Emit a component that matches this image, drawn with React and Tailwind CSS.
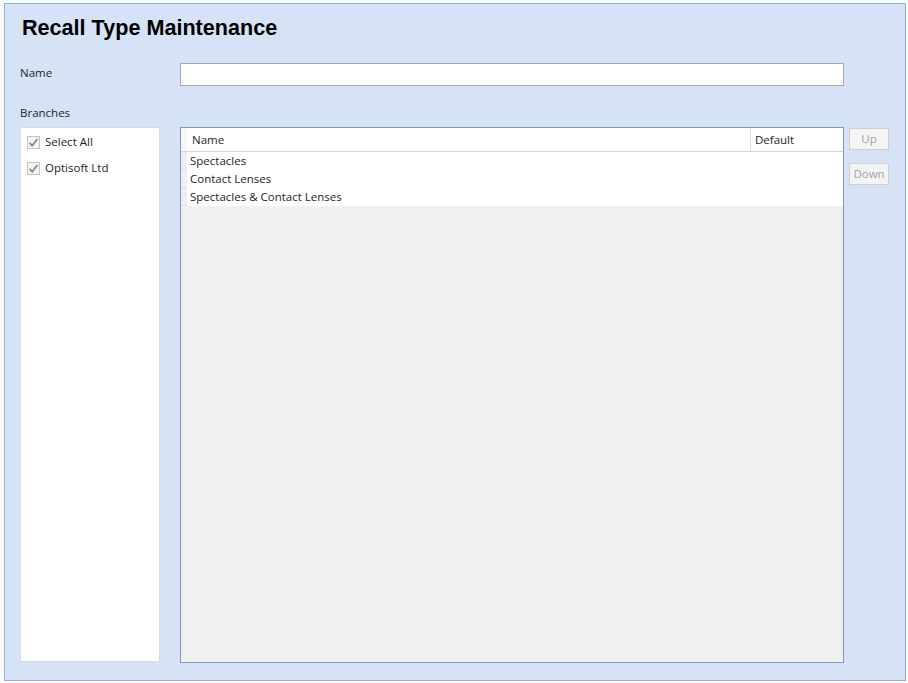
import React from "react";

const ui = { fontFamily: '"Open Sans", "Noto Sans", sans-serif' };

const branches = ["Select All", "Optisoft Ltd"];
const recallTypes = ["Spectacles", "Contact Lenses", "Spectacles & Contact Lenses"];

function Check() {
  return (
    <span className="w-[13px] h-[13px] border border-[#c4c4c4] bg-[#f4f4f4] flex items-center justify-center">
      <svg width="11" height="11" viewBox="0 0 11 11">
        <path d="M1.5 5.8 L4.2 8.6 L9.5 2" fill="none" stroke="#8a8a8a" strokeWidth="1.7" />
      </svg>
    </span>
  );
}

function SideButton({ label }) {
  return (
    <button className="w-[40px] h-[22px] border border-[#cfcfcf] bg-[#f4f4f4] text-[#a2a2a2] text-[11.5px] leading-none flex items-center justify-center">
      {label}
    </button>
  );
}

export default function App() {
  return (
    <div className="w-[908px] h-[683px] bg-white pt-[3px] pl-[4px]" style={ui}>
      <div className="w-[902px] h-[678px] border border-[#8fb0dc] bg-[#d6e3f7] flex flex-col px-[15px]">
        <h1
          className="mt-[11px] pl-[2px] text-[21.6px] leading-[25px] font-bold text-black"
          style={{ fontFamily: '"Liberation Sans", Arial, sans-serif' }}
        >
          Recall Type Maintenance
        </h1>

        <div className="mt-[23px] flex items-start text-[11.5px] text-[#1e1e1e]">
          <span className="w-[160px] leading-[16px] mt-[2px]">Name</span>
          <div className="w-[664px] h-[23px] bg-white border border-[#a9a9a9]" />
        </div>

        <p className="mt-[19px] text-[11.5px] leading-[16px] text-[#1e1e1e]">Branches</p>

        <div className="mt-[6px] flex items-start">
          <div className="w-[140px] h-[535px] bg-white border border-[#d5dbe3] pt-[6px] pl-[6px] flex flex-col gap-[10px]">
            {branches.map((b) => (
              <div key={b} className="flex items-center gap-[5px] h-[16px] text-[11.5px] text-[#1e1e1e]">
                <Check />
                <span>{b}</span>
              </div>
            ))}
          </div>

          <div className="ml-[20px] w-[664px] h-[536px] border border-[#7d99c2] bg-[#f0f0f0] flex flex-col text-[11.5px] text-[#1e1e1e]">
            <div className="h-[24px] flex bg-white border-b border-[#d5d5d5]">
              <div className="w-[6px] bg-[#f7f7f7]" />
              <div className="flex-1 flex items-center pl-[5px] border-r border-[#dcdcdc]">Name</div>
              <div className="w-[92px] flex items-center pl-[4px]">Default</div>
            </div>
            {recallTypes.map((r) => (
              <div key={r} className="h-[18px] flex bg-white">
                <div className="w-[6px] bg-[#f0f0f0] border-b border-[#dedede]" />
                <div className="flex-1 flex items-center pl-[3px]">{r}</div>
              </div>
            ))}
          </div>

          <div className="ml-[5px] mt-[1px] flex flex-col gap-[13px]">
            <SideButton label="Up" />
            <SideButton label="Down" />
          </div>
        </div>
      </div>
    </div>
  );
}
